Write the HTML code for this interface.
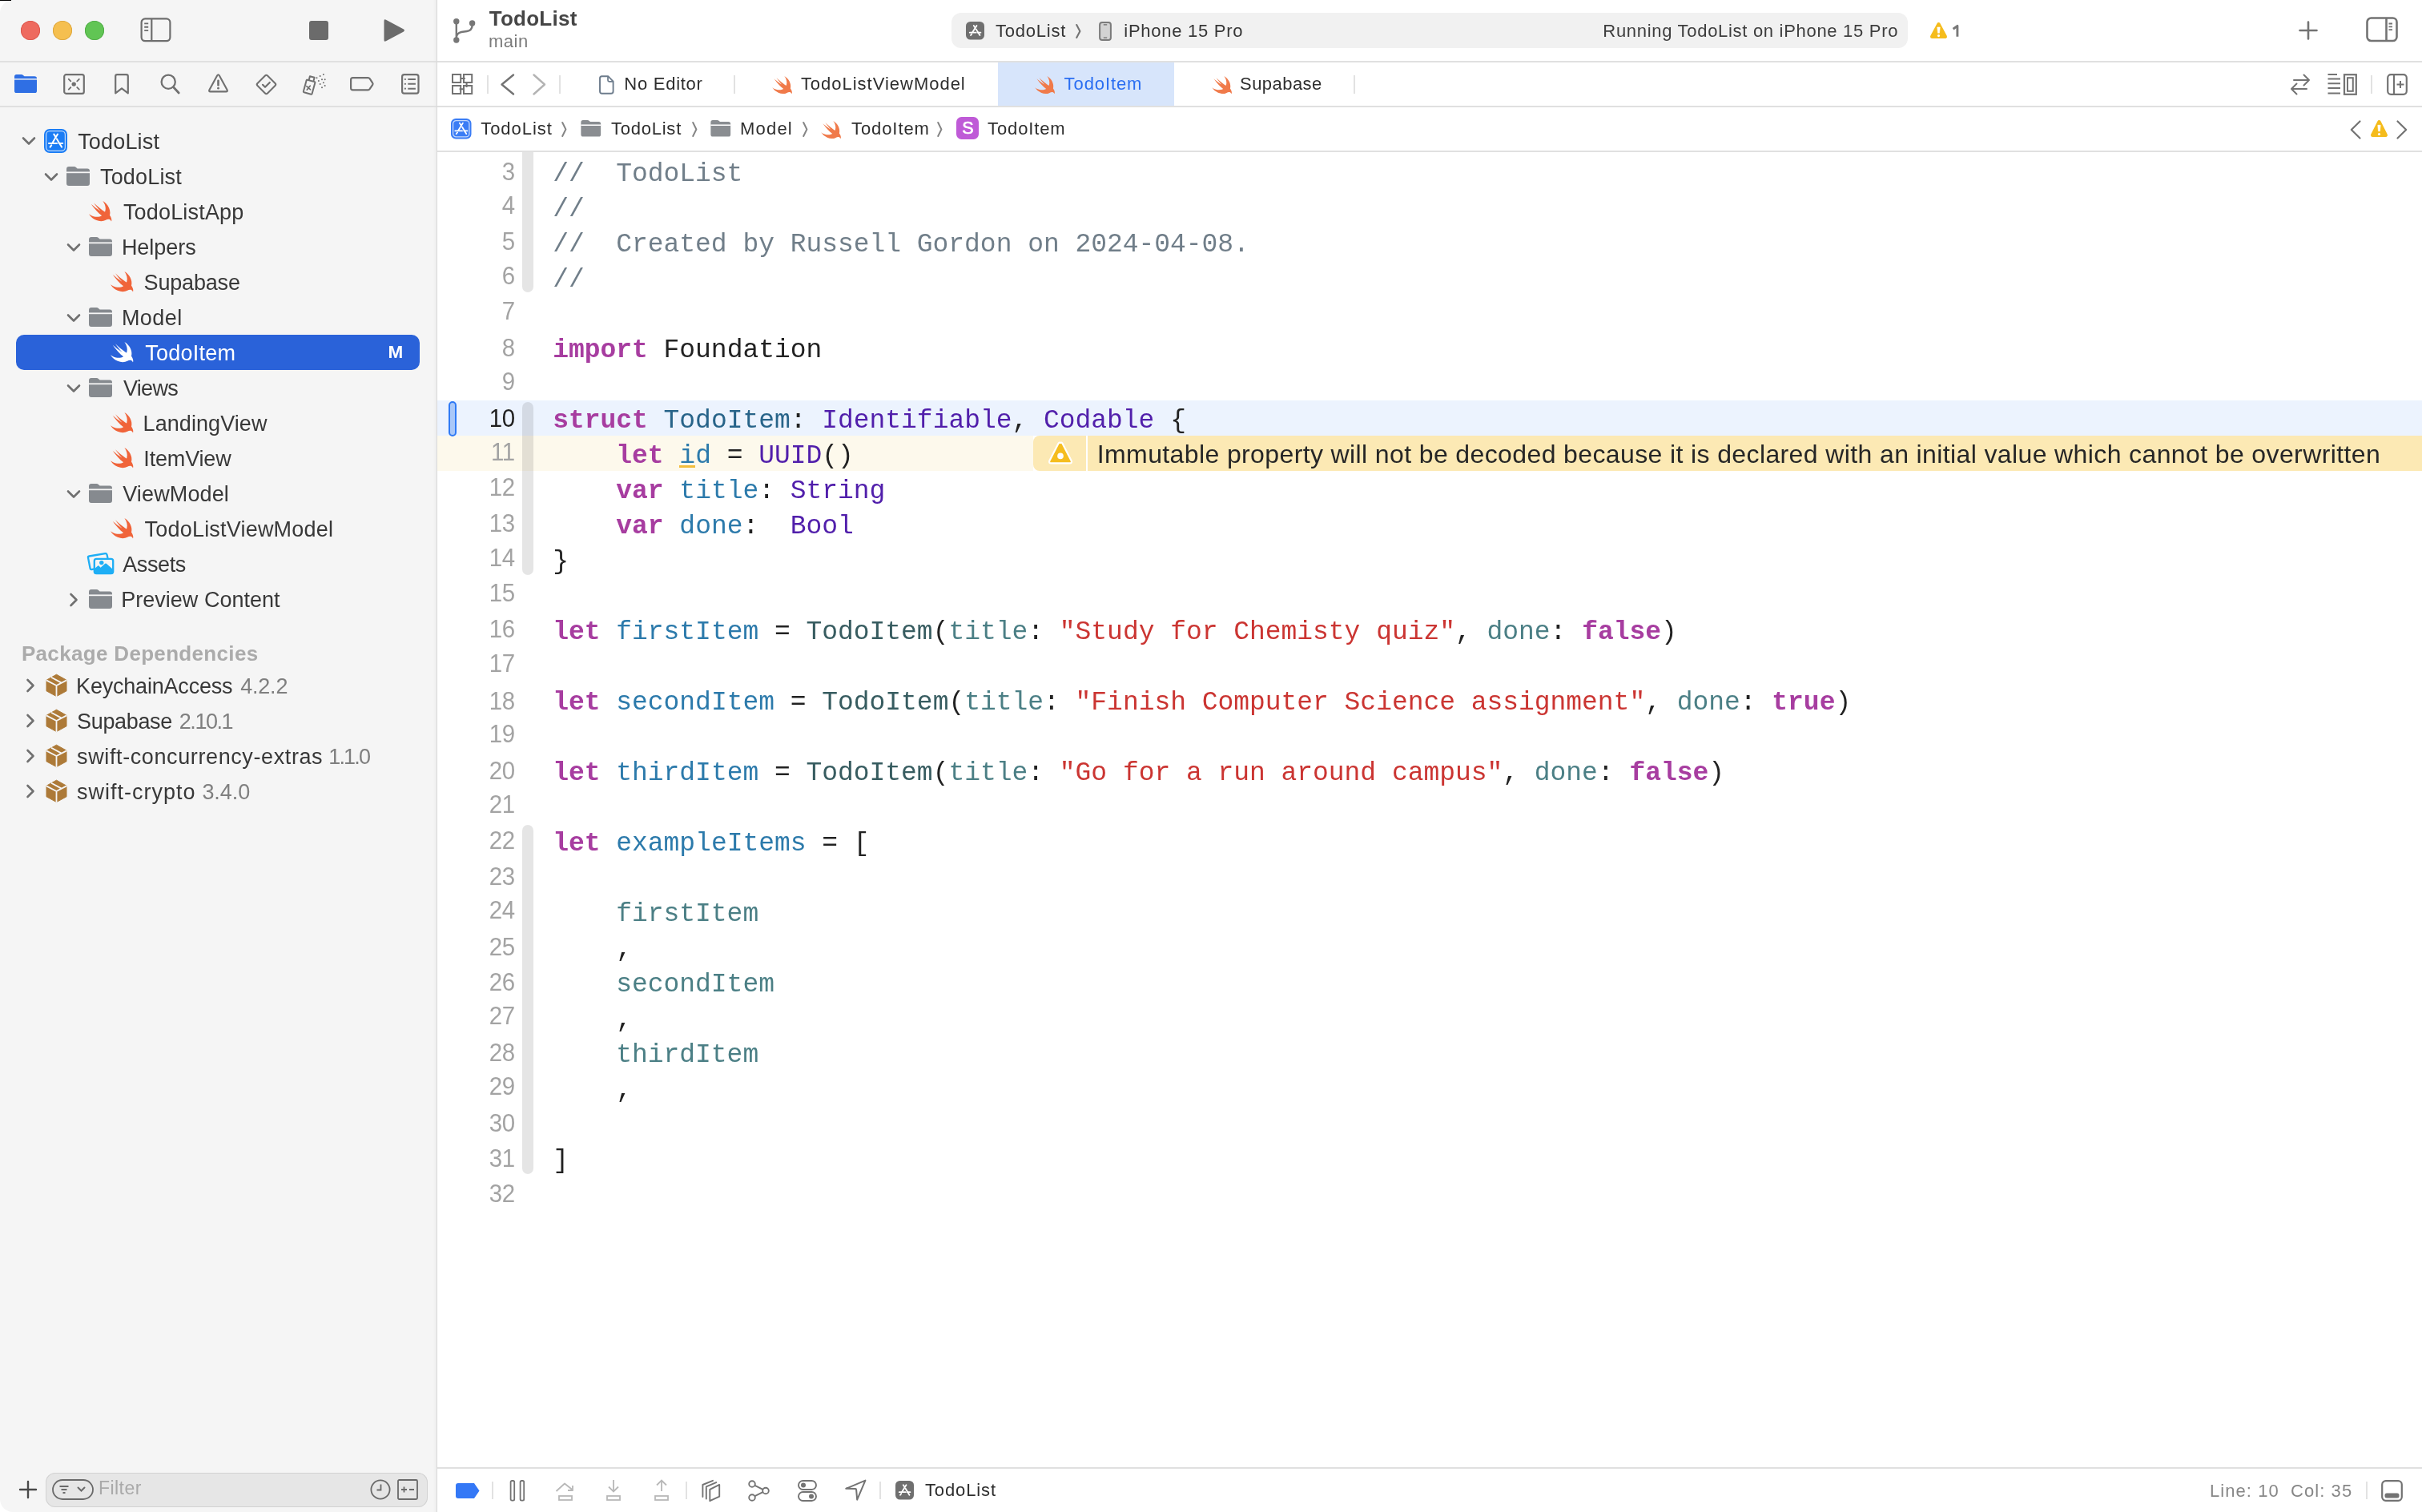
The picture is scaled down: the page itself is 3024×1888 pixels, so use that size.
<!DOCTYPE html><html><head><meta charset="utf-8"><style>html,body{margin:0;padding:0;width:3024px;height:1888px;overflow:hidden;background:#fff}*{box-sizing:border-box}</style></head><body><div style="position:absolute;left:0;top:0;width:3024px;height:1888px;overflow:hidden;border-radius:16px 0 0 16px;background:#fff;will-change:transform">
<div style="position:absolute;left:0px;top:0px;width:545px;height:1888px;background:#f5f5f5;"></div>
<div style="position:absolute;left:541px;top:0px;width:4px;height:1888px;background:linear-gradient(to right, rgba(0,0,0,0), rgba(0,0,0,0.035));"></div>
<div style="position:absolute;left:545px;top:0px;width:1px;height:1888px;background:#d9d9d9;"></div>
<div style="position:absolute;left:0px;top:76px;width:545px;height:2px;background:#e0e0e0;"></div>
<div style="position:absolute;left:546px;top:76px;width:2478px;height:2px;background:#e0e0e0;"></div>
<div style="position:absolute;left:0px;top:132px;width:545px;height:2px;background:#e0e0e0;"></div>
<div style="position:absolute;left:546px;top:132px;width:2478px;height:2px;background:#e0e0e0;"></div>
<div style="position:absolute;left:546px;top:188px;width:2478px;height:2px;background:#e0e0e0;"></div>
<div style="position:absolute;left:546px;top:1832px;width:2478px;height:2px;background:#e0e0e0;"></div>
<div style="position:absolute;left:26px;top:26px;width:24px;height:24px;border-radius:50%;background:#ee6a5f;box-shadow:inset 0 0 0 0.8px #d9534a"></div>
<div style="position:absolute;left:66px;top:26px;width:24px;height:24px;border-radius:50%;background:#f5bf4f;box-shadow:inset 0 0 0 0.8px #d9a23a"></div>
<div style="position:absolute;left:105.5px;top:26px;width:24px;height:24px;border-radius:50%;background:#61c554;box-shadow:inset 0 0 0 0.8px #4ea845"></div>
<svg style="position:absolute;left:174px;top:21px;overflow:visible" width="41" height="32" viewBox="0 0 41 32"><rect x="2.6" y="2.4" width="35.8" height="27.8" rx="4.6" fill="none" stroke="#6e6e6e" stroke-width="2.2"/><path d="M15.3 2.5V30.2" stroke="#6e6e6e" stroke-width="2.2"/><path d="M6.2 8.4H11.2M6.2 12.8H11.2M6.2 17.1H11.2" stroke="#6e6e6e" stroke-width="1.9"/></svg>
<div style="position:absolute;left:386px;top:26px;width:24px;height:24px;background:#6b6b6b;border-radius:3px"></div>
<svg style="position:absolute;left:478px;top:23px;overflow:visible" width="28" height="30" viewBox="0 0 28 30"><path d="M1.5 3.2Q1.5 0.4 4 1.8L26 13.6Q28 15 26 16.4L4 28.2Q1.5 29.6 1.5 26.8Z" fill="#6b6b6b"/></svg>
<svg style="position:absolute;left:18px;top:93px;overflow:visible" width="28" height="23" viewBox="0 0 28 23"><path fill="#2f6fe4" d="M0 2.6Q0 0 2.6 0H8.6Q10 0 11 1L12.4 2.2H25Q28 2.2 28 5V20.4Q28 23 25.4 23H2.6Q0 23 0 20.4Z"/><rect x="0" y="5.2" width="28" height="1.4" fill="#f5f5f5"/></svg>
<svg style="position:absolute;left:79px;top:92px;overflow:visible" width="27" height="26" viewBox="0 0 27 26"><rect x="1.2" y="1.2" width="24.6" height="23.6" rx="2.4" fill="none" stroke="#707070" stroke-width="2.2"/><circle cx="13.2" cy="13.1" r="2.7" fill="#707070"/><path d="M6.8 6.8L9.3 9.3M19.8 6.8L17.3 9.3M6.8 19.6L9.3 17.1M19.8 19.6L17.3 17.1" stroke="#707070" stroke-width="1.9" stroke-linecap="round"/></svg>
<svg style="position:absolute;left:143px;top:92px;overflow:visible" width="18" height="26" viewBox="0 0 18 26"><path d="M3.2 1.2H14.8Q16.8 1.2 16.8 3.2V24.4L9 18.4L1.2 24.4V3.2Q1.2 1.2 3.2 1.2Z" fill="none" stroke="#707070" stroke-width="2.2" stroke-linejoin="round"/></svg>
<svg style="position:absolute;left:200px;top:92px;overflow:visible" width="25" height="26" viewBox="0 0 25 26"><circle cx="10.2" cy="10.2" r="8.6" fill="none" stroke="#707070" stroke-width="2.3"/><path d="M16.5 16.8L23.2 24" stroke="#707070" stroke-width="2.8" stroke-linecap="round"/></svg>
<svg style="position:absolute;left:260px;top:92px;overflow:visible" width="25" height="24" viewBox="0 0 25 24"><path d="M11.2 2.3Q12.5 0.2 13.8 2.3L23.6 20.2Q24.6 22.4 22.2 22.4H2.8Q0.4 22.4 1.4 20.2Z" fill="none" stroke="#707070" stroke-width="2.1" stroke-linejoin="round"/><path d="M12.5 8.8V14.2" stroke="#707070" stroke-width="2.6" stroke-linecap="round"/><circle cx="12.5" cy="18.2" r="1.4" fill="#707070"/></svg>
<svg style="position:absolute;left:319px;top:92px;overflow:visible" width="27" height="27" viewBox="0 0 27 27"><path d="M12 2.5Q13.5 1 15 2.5L24.5 12Q26 13.5 24.5 15L15 24.5Q13.5 26 12 24.5L2.5 15Q1 13.5 2.5 12Z" fill="none" stroke="#707070" stroke-width="2.1" stroke-linejoin="round"/><path d="M9 13.8L12 16.8L17.8 11" fill="none" stroke="#707070" stroke-width="2.2" stroke-linecap="round" stroke-linejoin="round"/></svg>
<svg style="position:absolute;left:378px;top:92px;overflow:visible" width="30" height="28" viewBox="0 0 30 28"><g fill="none" stroke="#707070" stroke-width="2" stroke-linejoin="round"><path d="M4.6 8.4Q4.9 7.4 5.9 7.7L14.6 10.1Q15.6 10.4 15.3 11.4L11.6 25Q11.3 26 10.3 25.7L1.6 23.3Q0.6 23 0.9 22Z"/><path d="M7.6 8.3L8.9 3.3L14.6 4.8L13.3 9.8"/></g><path d="M4.8 15.6L9.6 19.8M9.2 15.2L5.2 20.2" stroke="#707070" stroke-width="1.7" stroke-linecap="round"/><g fill="#707070"><circle cx="25.9" cy="1" r="1"/><circle cx="21.7" cy="3" r="1"/><circle cx="17.5" cy="5.2" r="1"/><circle cx="24" cy="7.2" r="1"/><circle cx="27.7" cy="7.2" r="1"/><circle cx="19.9" cy="9" r="1"/><circle cx="25.9" cy="11.2" r="1"/><circle cx="21.7" cy="13" r="1"/><circle cx="27.7" cy="15" r="1"/><circle cx="24" cy="17.2" r="1"/></g></svg>
<svg style="position:absolute;left:437px;top:96px;overflow:visible" width="30" height="18" viewBox="0 0 30 18"><path d="M1.1 3.4Q1.1 1.1 3.4 1.1H22.6Q23.8 1.1 24.6 2.2L28.2 7.6Q29 8.7 28.2 9.8L24.6 15.2Q23.8 16.3 22.6 16.3H3.4Q1.1 16.3 1.1 14Z" fill="none" stroke="#707070" stroke-width="2.2" stroke-linejoin="round"/></svg>
<svg style="position:absolute;left:501px;top:92px;overflow:visible" width="23" height="26" viewBox="0 0 23 26"><rect x="1.1" y="1.1" width="20.4" height="23.6" rx="2.6" fill="none" stroke="#707070" stroke-width="2.2"/><path d="M8.3 7H17.9M8.3 12.8H17.9M8.3 18.7H17.9" stroke="#707070" stroke-width="2"/><g fill="#707070"><circle cx="4.9" cy="7" r="1.1"/><circle cx="4.9" cy="12.8" r="1.1"/><circle cx="4.9" cy="18.7" r="1.1"/></g></svg>
<svg style="position:absolute;left:27px;top:170px;overflow:visible" width="18" height="12" viewBox="0 0 18 12"><path d="M2 2.5L9 9.5L16 2.5" fill="none" stroke="#707070" stroke-width="2.6" stroke-linecap="round" stroke-linejoin="round"/></svg>
<svg style="position:absolute;left:54.5px;top:161px;overflow:visible" width="29" height="30" viewBox="0 0 29 30"><rect x="0" y="0" width="29" height="30" rx="6.96" fill="#1a7cf5"/><rect x="2.6" y="2.6" width="23.8" height="24.8" rx="4.76" fill="none" stroke="#ffffff" stroke-opacity="0.7" stroke-width="1.3"/><g transform="scale(1.0000,1.0000)" stroke="#fff" stroke-width="2.0" stroke-linecap="round" fill="none"><path d="M12.3 6.6L14.3 9.6"/><path d="M17.0 6.6L10.4 17.6"/><path d="M9.2 20.4L7.6 22.6"/><path d="M15.9 12.4L22.0 22.6"/><path d="M6.0 18.1H16.0M18.6 18.1H23.2"/></g></svg>
<div id="t0" style="position:absolute;left:97.20px;top:164.04px;font-family:'Liberation Sans', sans-serif;font-size:27px;line-height:27px;color:#383838;font-weight:400;letter-spacing:0.164px;white-space:pre;">TodoList</div>
<svg style="position:absolute;left:55px;top:214.5px;overflow:visible" width="18" height="12" viewBox="0 0 18 12"><path d="M2 2.5L9 9.5L16 2.5" fill="none" stroke="#707070" stroke-width="2.6" stroke-linecap="round" stroke-linejoin="round"/></svg>
<svg style="position:absolute;left:83px;top:208px;overflow:visible" width="29" height="24" viewBox="0 0 29 24"><path fill="#868a8f" d="M0 3.2Q0 0 3 0H9.5Q11 0 12.2 1.2L13.6 2.4H26Q29 2.4 29 5.4V21Q29 24 26 24H3Q0 24 0 21Z"/><rect x="0" y="6.4" width="29" height="1.8" fill="#f5f5f5"/></svg>
<div id="t1" style="position:absolute;left:125.00px;top:208.04px;font-family:'Liberation Sans', sans-serif;font-size:27px;line-height:27px;color:#383838;font-weight:400;letter-spacing:0.164px;white-space:pre;">TodoList</div>
<svg style="position:absolute;left:111.5px;top:250.8px;overflow:visible" width="27.2" height="27.2" viewBox="0 0 27.2 27.2"><g transform="scale(1.5632) translate(-3.04,-3.41)"><path fill="#f0643a" d="M13.543 3.41c4.114 2.47 6.545 7.162 5.549 11.131-.024.093-.05.181-.076.272l.002.001c2.062 2.538 1.5 5.258 1.236 4.745-1.072-2.086-3.066-1.568-4.088-1.043a6.803 6.803 0 0 1-.281.158l-.02.012-.002.002c-2.115 1.123-4.957 1.205-7.812-.022a12.568 12.568 0 0 1-5.64-4.838c.649.48 1.35.902 2.097 1.252 3.019 1.414 6.051 1.311 8.197-.002C9.651 12.73 7.101 9.67 5.146 7.191a14.42 14.42 0 0 1-1.005-1.384c2.34 2.142 6.038 4.83 7.365 5.576C8.69 8.408 6.208 4.743 6.324 4.86c4.436 4.47 8.528 6.996 8.528 6.996.154.085.27.154.36.213.085-.215.16-.437.224-.668.708-2.588-.09-5.548-1.893-7.992z"/></g></svg>
<div id="t2" style="position:absolute;left:153.90px;top:252.04px;font-family:'Liberation Sans', sans-serif;font-size:27px;line-height:27px;color:#383838;font-weight:400;letter-spacing:0.180px;white-space:pre;">TodoListApp</div>
<svg style="position:absolute;left:83px;top:302.5px;overflow:visible" width="18" height="12" viewBox="0 0 18 12"><path d="M2 2.5L9 9.5L16 2.5" fill="none" stroke="#707070" stroke-width="2.6" stroke-linecap="round" stroke-linejoin="round"/></svg>
<svg style="position:absolute;left:111px;top:296px;overflow:visible" width="29" height="24" viewBox="0 0 29 24"><path fill="#868a8f" d="M0 3.2Q0 0 3 0H9.5Q11 0 12.2 1.2L13.6 2.4H26Q29 2.4 29 5.4V21Q29 24 26 24H3Q0 24 0 21Z"/><rect x="0" y="6.4" width="29" height="1.8" fill="#f5f5f5"/></svg>
<div id="t3" style="position:absolute;left:151.90px;top:296.04px;font-family:'Liberation Sans', sans-serif;font-size:27px;line-height:27px;color:#383838;font-weight:400;letter-spacing:-0.033px;white-space:pre;">Helpers</div>
<svg style="position:absolute;left:139px;top:338.8px;overflow:visible" width="27.2" height="27.2" viewBox="0 0 27.2 27.2"><g transform="scale(1.5632) translate(-3.04,-3.41)"><path fill="#f0643a" d="M13.543 3.41c4.114 2.47 6.545 7.162 5.549 11.131-.024.093-.05.181-.076.272l.002.001c2.062 2.538 1.5 5.258 1.236 4.745-1.072-2.086-3.066-1.568-4.088-1.043a6.803 6.803 0 0 1-.281.158l-.02.012-.002.002c-2.115 1.123-4.957 1.205-7.812-.022a12.568 12.568 0 0 1-5.64-4.838c.649.48 1.35.902 2.097 1.252 3.019 1.414 6.051 1.311 8.197-.002C9.651 12.73 7.101 9.67 5.146 7.191a14.42 14.42 0 0 1-1.005-1.384c2.34 2.142 6.038 4.83 7.365 5.576C8.69 8.408 6.208 4.743 6.324 4.86c4.436 4.47 8.528 6.996 8.528 6.996.154.085.27.154.36.213.085-.215.16-.437.224-.668.708-2.588-.09-5.548-1.893-7.992z"/></g></svg>
<div id="t4" style="position:absolute;left:179.60px;top:340.04px;font-family:'Liberation Sans', sans-serif;font-size:27px;line-height:27px;color:#383838;font-weight:400;letter-spacing:-0.179px;white-space:pre;">Supabase</div>
<svg style="position:absolute;left:83px;top:390.5px;overflow:visible" width="18" height="12" viewBox="0 0 18 12"><path d="M2 2.5L9 9.5L16 2.5" fill="none" stroke="#707070" stroke-width="2.6" stroke-linecap="round" stroke-linejoin="round"/></svg>
<svg style="position:absolute;left:111px;top:384px;overflow:visible" width="29" height="24" viewBox="0 0 29 24"><path fill="#868a8f" d="M0 3.2Q0 0 3 0H9.5Q11 0 12.2 1.2L13.6 2.4H26Q29 2.4 29 5.4V21Q29 24 26 24H3Q0 24 0 21Z"/><rect x="0" y="6.4" width="29" height="1.8" fill="#f5f5f5"/></svg>
<div id="t5" style="position:absolute;left:151.90px;top:384.04px;font-family:'Liberation Sans', sans-serif;font-size:27px;line-height:27px;color:#383838;font-weight:400;letter-spacing:0.450px;white-space:pre;">Model</div>
<div style="position:absolute;left:20px;top:418px;width:504px;height:44px;background:#2a62d9;border-radius:10px"></div>
<svg style="position:absolute;left:139px;top:426.8px;overflow:visible" width="27.2" height="27.2" viewBox="0 0 27.2 27.2"><g transform="scale(1.5632) translate(-3.04,-3.41)"><path fill="#ffffff" d="M13.543 3.41c4.114 2.47 6.545 7.162 5.549 11.131-.024.093-.05.181-.076.272l.002.001c2.062 2.538 1.5 5.258 1.236 4.745-1.072-2.086-3.066-1.568-4.088-1.043a6.803 6.803 0 0 1-.281.158l-.02.012-.002.002c-2.115 1.123-4.957 1.205-7.812-.022a12.568 12.568 0 0 1-5.64-4.838c.649.48 1.35.902 2.097 1.252 3.019 1.414 6.051 1.311 8.197-.002C9.651 12.73 7.101 9.67 5.146 7.191a14.42 14.42 0 0 1-1.005-1.384c2.34 2.142 6.038 4.83 7.365 5.576C8.69 8.408 6.208 4.743 6.324 4.86c4.436 4.47 8.528 6.996 8.528 6.996.154.085.27.154.36.213.085-.215.16-.437.224-.668.708-2.588-.09-5.548-1.893-7.992z"/></g></svg>
<div id="t6" style="position:absolute;left:181.30px;top:428.04px;font-family:'Liberation Sans', sans-serif;font-size:27px;line-height:27px;color:#ffffff;font-weight:400;letter-spacing:0.221px;white-space:pre;">TodoItem</div>
<div id="t7" style="position:absolute;left:484.50px;top:429.15px;font-family:'Liberation Sans', sans-serif;font-size:22.5px;line-height:22.5px;color:#ffffff;font-weight:700;letter-spacing:3.000px;white-space:pre;">M</div>
<svg style="position:absolute;left:83px;top:478.5px;overflow:visible" width="18" height="12" viewBox="0 0 18 12"><path d="M2 2.5L9 9.5L16 2.5" fill="none" stroke="#707070" stroke-width="2.6" stroke-linecap="round" stroke-linejoin="round"/></svg>
<svg style="position:absolute;left:111px;top:472px;overflow:visible" width="29" height="24" viewBox="0 0 29 24"><path fill="#868a8f" d="M0 3.2Q0 0 3 0H9.5Q11 0 12.2 1.2L13.6 2.4H26Q29 2.4 29 5.4V21Q29 24 26 24H3Q0 24 0 21Z"/><rect x="0" y="6.4" width="29" height="1.8" fill="#f5f5f5"/></svg>
<div id="t8" style="position:absolute;left:153.90px;top:472.04px;font-family:'Liberation Sans', sans-serif;font-size:27px;line-height:27px;color:#383838;font-weight:400;letter-spacing:-0.675px;white-space:pre;">Views</div>
<svg style="position:absolute;left:139px;top:514.8px;overflow:visible" width="27.2" height="27.2" viewBox="0 0 27.2 27.2"><g transform="scale(1.5632) translate(-3.04,-3.41)"><path fill="#f0643a" d="M13.543 3.41c4.114 2.47 6.545 7.162 5.549 11.131-.024.093-.05.181-.076.272l.002.001c2.062 2.538 1.5 5.258 1.236 4.745-1.072-2.086-3.066-1.568-4.088-1.043a6.803 6.803 0 0 1-.281.158l-.02.012-.002.002c-2.115 1.123-4.957 1.205-7.812-.022a12.568 12.568 0 0 1-5.64-4.838c.649.48 1.35.902 2.097 1.252 3.019 1.414 6.051 1.311 8.197-.002C9.651 12.73 7.101 9.67 5.146 7.191a14.42 14.42 0 0 1-1.005-1.384c2.34 2.142 6.038 4.83 7.365 5.576C8.69 8.408 6.208 4.743 6.324 4.86c4.436 4.47 8.528 6.996 8.528 6.996.154.085.27.154.36.213.085-.215.16-.437.224-.668.708-2.588-.09-5.548-1.893-7.992z"/></g></svg>
<div id="t9" style="position:absolute;left:178.60px;top:516.04px;font-family:'Liberation Sans', sans-serif;font-size:27px;line-height:27px;color:#383838;font-weight:400;letter-spacing:0.070px;white-space:pre;">LandingView</div>
<svg style="position:absolute;left:139px;top:558.8px;overflow:visible" width="27.2" height="27.2" viewBox="0 0 27.2 27.2"><g transform="scale(1.5632) translate(-3.04,-3.41)"><path fill="#f0643a" d="M13.543 3.41c4.114 2.47 6.545 7.162 5.549 11.131-.024.093-.05.181-.076.272l.002.001c2.062 2.538 1.5 5.258 1.236 4.745-1.072-2.086-3.066-1.568-4.088-1.043a6.803 6.803 0 0 1-.281.158l-.02.012-.002.002c-2.115 1.123-4.957 1.205-7.812-.022a12.568 12.568 0 0 1-5.64-4.838c.649.48 1.35.902 2.097 1.252 3.019 1.414 6.051 1.311 8.197-.002C9.651 12.73 7.101 9.67 5.146 7.191a14.42 14.42 0 0 1-1.005-1.384c2.34 2.142 6.038 4.83 7.365 5.576C8.69 8.408 6.208 4.743 6.324 4.86c4.436 4.47 8.528 6.996 8.528 6.996.154.085.27.154.36.213.085-.215.16-.437.224-.668.708-2.588-.09-5.548-1.893-7.992z"/></g></svg>
<div id="t10" style="position:absolute;left:179.30px;top:560.04px;font-family:'Liberation Sans', sans-serif;font-size:27px;line-height:27px;color:#383838;font-weight:400;letter-spacing:-0.164px;white-space:pre;">ItemView</div>
<svg style="position:absolute;left:83px;top:610.5px;overflow:visible" width="18" height="12" viewBox="0 0 18 12"><path d="M2 2.5L9 9.5L16 2.5" fill="none" stroke="#707070" stroke-width="2.6" stroke-linecap="round" stroke-linejoin="round"/></svg>
<svg style="position:absolute;left:111px;top:604px;overflow:visible" width="29" height="24" viewBox="0 0 29 24"><path fill="#868a8f" d="M0 3.2Q0 0 3 0H9.5Q11 0 12.2 1.2L13.6 2.4H26Q29 2.4 29 5.4V21Q29 24 26 24H3Q0 24 0 21Z"/><rect x="0" y="6.4" width="29" height="1.8" fill="#f5f5f5"/></svg>
<div id="t11" style="position:absolute;left:153.20px;top:604.04px;font-family:'Liberation Sans', sans-serif;font-size:27px;line-height:27px;color:#383838;font-weight:400;letter-spacing:0.138px;white-space:pre;">ViewModel</div>
<svg style="position:absolute;left:139px;top:646.8px;overflow:visible" width="27.2" height="27.2" viewBox="0 0 27.2 27.2"><g transform="scale(1.5632) translate(-3.04,-3.41)"><path fill="#f0643a" d="M13.543 3.41c4.114 2.47 6.545 7.162 5.549 11.131-.024.093-.05.181-.076.272l.002.001c2.062 2.538 1.5 5.258 1.236 4.745-1.072-2.086-3.066-1.568-4.088-1.043a6.803 6.803 0 0 1-.281.158l-.02.012-.002.002c-2.115 1.123-4.957 1.205-7.812-.022a12.568 12.568 0 0 1-5.64-4.838c.649.48 1.35.902 2.097 1.252 3.019 1.414 6.051 1.311 8.197-.002C9.651 12.73 7.101 9.67 5.146 7.191a14.42 14.42 0 0 1-1.005-1.384c2.34 2.142 6.038 4.83 7.365 5.576C8.69 8.408 6.208 4.743 6.324 4.86c4.436 4.47 8.528 6.996 8.528 6.996.154.085.27.154.36.213.085-.215.16-.437.224-.668.708-2.588-.09-5.548-1.893-7.992z"/></g></svg>
<div id="t12" style="position:absolute;left:180.60px;top:648.04px;font-family:'Liberation Sans', sans-serif;font-size:27px;line-height:27px;color:#383838;font-weight:400;letter-spacing:0.200px;white-space:pre;">TodoListViewModel</div>
<svg style="position:absolute;left:109px;top:688px;overflow:visible" width="34" height="30" viewBox="0 0 34 30"><path d="M7.6 22.6L5.6 23.1Q3.9 23.4 3.6 21.8L1.0 8.4Q0.7 6.8 2.3 6.5L22.4 3.2Q24.1 3.0 24.5 4.6L25.4 8.6" fill="none" stroke="#1eaef5" stroke-width="2.3" stroke-linecap="round"/><rect x="8.8" y="9.8" width="23.4" height="18.2" rx="2.6" fill="none" stroke="#1eaef5" stroke-width="2.3"/><path d="M8.6 22.6L13.2 18.6Q13.8 18.1 14.4 18.6L16.6 20.7L22.2 15.8Q23 15.2 23.8 15.8L32.4 23.2V26.4Q32.4 29 29.8 29H11.2Q8.6 29 8.6 26.4Z" fill="#1eaef5"/><circle cx="17.8" cy="14.6" r="2.7" fill="#1eaef5"/></svg>
<div id="t13" style="position:absolute;left:153.20px;top:692.04px;font-family:'Liberation Sans', sans-serif;font-size:27px;line-height:27px;color:#383838;font-weight:400;letter-spacing:-0.390px;white-space:pre;">Assets</div>
<svg style="position:absolute;left:86px;top:739.5px;overflow:visible" width="12" height="18" viewBox="0 0 12 18"><path d="M2.5 2L9.5 9L2.5 16" fill="none" stroke="#707070" stroke-width="2.6" stroke-linecap="round" stroke-linejoin="round"/></svg>
<svg style="position:absolute;left:111px;top:736px;overflow:visible" width="29" height="24" viewBox="0 0 29 24"><path fill="#868a8f" d="M0 3.2Q0 0 3 0H9.5Q11 0 12.2 1.2L13.6 2.4H26Q29 2.4 29 5.4V21Q29 24 26 24H3Q0 24 0 21Z"/><rect x="0" y="6.4" width="29" height="1.8" fill="#f5f5f5"/></svg>
<div id="t14" style="position:absolute;left:151.20px;top:736.04px;font-family:'Liberation Sans', sans-serif;font-size:27px;line-height:27px;color:#383838;font-weight:400;letter-spacing:0.021px;white-space:pre;">Preview Content</div>
<div id="t15" style="position:absolute;left:26.90px;top:802.99px;font-family:'Liberation Sans', sans-serif;font-size:26px;line-height:26px;color:#ababab;font-weight:700;letter-spacing:0.329px;white-space:pre;">Package Dependencies</div>
<svg style="position:absolute;left:32px;top:847.0px;overflow:visible" width="12" height="18" viewBox="0 0 12 18"><path d="M2.5 2L9.5 9L2.5 16" fill="none" stroke="#707070" stroke-width="2.6" stroke-linecap="round" stroke-linejoin="round"/></svg>
<svg style="position:absolute;left:56.5px;top:841.0px;overflow:visible" width="27" height="29" viewBox="0 0 27 29"><path fill="#ad7a38" stroke="#ad7a38" stroke-width="1" stroke-linejoin="round" d="M13.5 1.2L26 8.2V21.8L13.5 28.6L1 21.8V8.2Z"/><path d="M0.8 8.4L13.5 15L26.2 8.4M13.5 15V29M7 4.8L19.8 11.6" fill="none" stroke="#f5f5f5" stroke-width="1.8"/></svg>
<div id="t16" style="position:absolute;left:95.10px;top:843.54px;font-family:'Liberation Sans', sans-serif;font-size:27px;line-height:27px;color:#383838;font-weight:400;letter-spacing:-0.204px;white-space:pre;">KeychainAccess</div>
<div id="t17" style="position:absolute;left:300.20px;top:843.54px;font-family:'Liberation Sans', sans-serif;font-size:27px;line-height:27px;color:#7f7f7f;font-weight:400;letter-spacing:-0.200px;white-space:pre;">4.2.2</div>
<svg style="position:absolute;left:32px;top:891.0px;overflow:visible" width="12" height="18" viewBox="0 0 12 18"><path d="M2.5 2L9.5 9L2.5 16" fill="none" stroke="#707070" stroke-width="2.6" stroke-linecap="round" stroke-linejoin="round"/></svg>
<svg style="position:absolute;left:56.5px;top:885.0px;overflow:visible" width="27" height="29" viewBox="0 0 27 29"><path fill="#ad7a38" stroke="#ad7a38" stroke-width="1" stroke-linejoin="round" d="M13.5 1.2L26 8.2V21.8L13.5 28.6L1 21.8V8.2Z"/><path d="M0.8 8.4L13.5 15L26.2 8.4M13.5 15V29M7 4.8L19.8 11.6" fill="none" stroke="#f5f5f5" stroke-width="1.8"/></svg>
<div id="t18" style="position:absolute;left:96.10px;top:887.54px;font-family:'Liberation Sans', sans-serif;font-size:27px;line-height:27px;color:#383838;font-weight:400;letter-spacing:-0.350px;white-space:pre;">Supabase</div>
<div id="t19" style="position:absolute;left:223.80px;top:887.54px;font-family:'Liberation Sans', sans-serif;font-size:27px;line-height:27px;color:#7f7f7f;font-weight:400;letter-spacing:-1.450px;white-space:pre;">2.10.1</div>
<svg style="position:absolute;left:32px;top:935.0px;overflow:visible" width="12" height="18" viewBox="0 0 12 18"><path d="M2.5 2L9.5 9L2.5 16" fill="none" stroke="#707070" stroke-width="2.6" stroke-linecap="round" stroke-linejoin="round"/></svg>
<svg style="position:absolute;left:56.5px;top:929.0px;overflow:visible" width="27" height="29" viewBox="0 0 27 29"><path fill="#ad7a38" stroke="#ad7a38" stroke-width="1" stroke-linejoin="round" d="M13.5 1.2L26 8.2V21.8L13.5 28.6L1 21.8V8.2Z"/><path d="M0.8 8.4L13.5 15L26.2 8.4M13.5 15V29M7 4.8L19.8 11.6" fill="none" stroke="#f5f5f5" stroke-width="1.8"/></svg>
<div id="t20" style="position:absolute;left:96.10px;top:931.54px;font-family:'Liberation Sans', sans-serif;font-size:27px;line-height:27px;color:#383838;font-weight:400;letter-spacing:0.607px;white-space:pre;">swift-concurrency-extras</div>
<div id="t21" style="position:absolute;left:410.20px;top:931.54px;font-family:'Liberation Sans', sans-serif;font-size:27px;line-height:27px;color:#7f7f7f;font-weight:400;letter-spacing:-1.800px;white-space:pre;">1.1.0</div>
<svg style="position:absolute;left:32px;top:979.0px;overflow:visible" width="12" height="18" viewBox="0 0 12 18"><path d="M2.5 2L9.5 9L2.5 16" fill="none" stroke="#707070" stroke-width="2.6" stroke-linecap="round" stroke-linejoin="round"/></svg>
<svg style="position:absolute;left:56.5px;top:973.0px;overflow:visible" width="27" height="29" viewBox="0 0 27 29"><path fill="#ad7a38" stroke="#ad7a38" stroke-width="1" stroke-linejoin="round" d="M13.5 1.2L26 8.2V21.8L13.5 28.6L1 21.8V8.2Z"/><path d="M0.8 8.4L13.5 15L26.2 8.4M13.5 15V29M7 4.8L19.8 11.6" fill="none" stroke="#f5f5f5" stroke-width="1.8"/></svg>
<div id="t22" style="position:absolute;left:96.10px;top:975.54px;font-family:'Liberation Sans', sans-serif;font-size:27px;line-height:27px;color:#383838;font-weight:400;letter-spacing:0.995px;white-space:pre;">swift-crypto</div>
<div id="t23" style="position:absolute;left:252.40px;top:975.54px;font-family:'Liberation Sans', sans-serif;font-size:27px;line-height:27px;color:#7f7f7f;font-weight:400;letter-spacing:-0.050px;white-space:pre;">3.4.0</div>
<svg style="position:absolute;left:24px;top:1849px;overflow:visible" width="22" height="22" viewBox="0 0 22 22"><path d="M11 1V21M1 11H21" stroke="#4a4a4a" stroke-width="2.4" stroke-linecap="round"/></svg>
<div style="position:absolute;left:57px;top:1838.5px;width:477px;height:43px;background:#e6e6e6;border-radius:12px;box-shadow:inset 0 0 0 1px #d2d2d2"></div>
<svg style="position:absolute;left:65px;top:1847px;overflow:visible" width="52" height="26" viewBox="0 0 52 26"><rect x="1" y="1" width="50" height="24" rx="12" fill="none" stroke="#6a6a6a" stroke-width="1.8"/><path d="M9.5 9H20.5M11.5 13H18.5M13.5 17H16.5" stroke="#6a6a6a" stroke-width="1.8"/><path d="M32.5 10.5L36.5 14.5L40.5 10.5" fill="none" stroke="#6a6a6a" stroke-width="2" stroke-linecap="round"/></svg>
<div id="t24" style="position:absolute;left:122.90px;top:1847.23px;font-family:'Liberation Sans', sans-serif;font-size:23px;line-height:23px;color:#a9a9a9;font-weight:400;letter-spacing:0.460px;white-space:pre;">Filter</div>
<svg style="position:absolute;left:462px;top:1847px;overflow:visible" width="26" height="26" viewBox="0 0 26 26"><circle cx="13" cy="13" r="11.6" fill="none" stroke="#6a6a6a" stroke-width="1.8"/><path d="M13.5 6.5V13.5H8.5" fill="none" stroke="#6a6a6a" stroke-width="1.8"/></svg>
<svg style="position:absolute;left:496px;top:1847px;overflow:visible" width="26" height="26" viewBox="0 0 26 26"><rect x="1" y="1" width="24" height="24" rx="1.5" fill="none" stroke="#6a6a6a" stroke-width="1.8"/><path d="M5 13H12M8.5 9.5V16.5M15 13H21" stroke="#6a6a6a" stroke-width="1.8"/></svg>
<svg style="position:absolute;left:563px;top:22px;overflow:visible" width="32" height="33" viewBox="0 0 32 33"><g fill="#777"><circle cx="6.8" cy="4.8" r="3.7"/><circle cx="26.6" cy="7" r="3.7"/><circle cx="6.8" cy="28" r="3.7"/></g><path d="M6.8 5V28M26.6 7V10Q26.3 16 20 17L13 18Q7 19.5 6.8 25" fill="none" stroke="#777" stroke-width="2.4"/></svg>
<div id="t25" style="position:absolute;left:610.80px;top:9.79px;font-family:'Liberation Sans', sans-serif;font-size:26px;line-height:26px;color:#464646;font-weight:700;letter-spacing:0.243px;white-space:pre;">TodoList</div>
<div id="t26" style="position:absolute;left:610.00px;top:41.38px;font-family:'Liberation Sans', sans-serif;font-size:22px;line-height:22px;color:#7c7c7c;font-weight:400;letter-spacing:0.500px;white-space:pre;">main</div>
<div style="position:absolute;left:1188px;top:16px;width:1194px;height:44px;background:#f1f1f1;border-radius:12px"></div>
<svg style="position:absolute;left:1206px;top:27px;overflow:visible" width="23" height="22.6" viewBox="0 0 23 22.6"><rect x="0" y="0" width="23" height="22.6" rx="5.52" fill="#6f6f6f"/><g transform="scale(0.7931,0.7533)" stroke="#fff" stroke-width="2.3" stroke-linecap="round" fill="none"><path d="M12.3 6.6L14.3 9.6"/><path d="M17.0 6.6L10.4 17.6"/><path d="M9.2 20.4L7.6 22.6"/><path d="M15.9 12.4L22.0 22.6"/><path d="M6.0 18.1H16.0M18.6 18.1H23.2"/></g></svg>
<div id="t27" style="position:absolute;left:1243.00px;top:27.58px;font-family:'Liberation Sans', sans-serif;font-size:22px;line-height:22px;color:#363636;font-weight:400;letter-spacing:0.786px;white-space:pre;">TodoList</div>
<svg style="position:absolute;left:1342px;top:29.5px;overflow:visible" width="9" height="18.0" viewBox="0 0 9 18.0"><path d="M2.2 1L6.4 9.0L2.2 17.0" fill="none" stroke="#737373" stroke-width="2.1" stroke-linecap="round" stroke-linejoin="round"/></svg>
<svg style="position:absolute;left:1372px;top:26.5px;overflow:visible" width="16" height="24" viewBox="0 0 16 24"><rect x="1.1" y="1.1" width="13.8" height="21.8" rx="3" fill="#d3d3d3" stroke="#7b7b7b" stroke-width="2"/><path d="M5.8 3.9H10.2M5.8 20.2H10.2" stroke="#6f6f6f" stroke-width="1.3"/></svg>
<div id="t28" style="position:absolute;left:1403.30px;top:27.58px;font-family:'Liberation Sans', sans-serif;font-size:22px;line-height:22px;color:#363636;font-weight:400;letter-spacing:0.725px;white-space:pre;">iPhone 15 Pro</div>
<div id="t29" style="position:absolute;left:2001.30px;top:27.58px;font-family:'Liberation Sans', sans-serif;font-size:22px;line-height:22px;color:#3d3d3d;font-weight:400;letter-spacing:0.700px;white-space:pre;">Running TodoList on iPhone 15 Pro</div>
<svg style="position:absolute;left:2409.5px;top:27.5px;overflow:visible" width="21" height="20" viewBox="0 0 21 20"><path d="M10.5 2.2L18.8 17.8H2.2Z" fill="#f5bc1c" stroke="#f5bc1c" stroke-width="4.4" stroke-linejoin="round"/><path d="M8.80 6.00H12.20L11.50 13.20H9.50Z" fill="#fff" stroke="#fff" stroke-width="0.6" stroke-linejoin="round"/><circle cx="10.5" cy="16.60" r="1.55" fill="#fff"/></svg>
<svg style="position:absolute;left:2436px;top:30px;overflow:visible" width="12" height="17" viewBox="0 0 12 17"><path d="M2.6 6.2L7.9 2.4V15.8" fill="none" stroke="#787878" stroke-width="2.9" stroke-linejoin="round"/></svg>
<svg style="position:absolute;left:2870px;top:26px;overflow:visible" width="24" height="24" viewBox="0 0 24 24"><path d="M12 1.5V22.5M1.5 12H22.5" stroke="#737373" stroke-width="2.6" stroke-linecap="round"/></svg>
<svg style="position:absolute;left:2954px;top:21px;overflow:visible" width="40" height="32" viewBox="0 0 40 32"><rect x="1.5" y="1.5" width="37" height="28.5" rx="5" fill="none" stroke="#737373" stroke-width="2.6"/><path d="M25.5 2V30" stroke="#737373" stroke-width="2.6"/><path d="M28.5 8.5H33M28.5 12.3H33M28.5 16.1H33" stroke="#737373" stroke-width="1.8"/></svg>
<div style="position:absolute;left:1246px;top:78px;width:220px;height:54px;background:#d7e5fb;"></div>
<svg style="position:absolute;left:564px;top:92px;overflow:visible" width="27" height="27" viewBox="0 0 27 27"><g fill="none" stroke="#737373" stroke-width="2"><rect x="1" y="1" width="10.2" height="10" /><rect x="15" y="1" width="10.2" height="10"/><rect x="1" y="15" width="10.2" height="10"/><rect x="15" y="15" width="10.2" height="10"/><path d="M11.2 6H16.8M18.6 11V17M9.6 19.2H15"/></g></svg>
<div style="position:absolute;left:608px;top:94px;width:2px;height:23px;background:#e2e2e2;"></div>
<svg style="position:absolute;left:624px;top:92px;overflow:visible" width="19" height="27" viewBox="0 0 19 27"><path d="M17 1.5L2.5 13.5L17 25.5" fill="none" stroke="#737373" stroke-width="2.4" stroke-linecap="round" stroke-linejoin="round"/></svg>
<svg style="position:absolute;left:665px;top:92px;overflow:visible" width="17" height="27" viewBox="0 0 17 27"><path d="M1.5 1.5L15 13.5L1.5 25.5" fill="none" stroke="#b3b3b3" stroke-width="2.4" stroke-linecap="round" stroke-linejoin="round"/></svg>
<div style="position:absolute;left:698px;top:94px;width:2px;height:23px;background:#e2e2e2;"></div>
<svg style="position:absolute;left:748px;top:93.5px;overflow:visible" width="19" height="24" viewBox="0 0 19 24"><path d="M3.4 1.2H11.2L17.6 7.6V20Q17.6 22.8 14.8 22.8H3.6Q1 22.8 1 20V3.8Q1 1.2 3.4 1.2Z" fill="none" stroke="#6d7c8c" stroke-width="1.9" stroke-linejoin="round"/><path d="M11 1.6V6.2Q11 7.8 12.6 7.8H17.2" fill="none" stroke="#6d7c8c" stroke-width="1.7"/></svg>
<div id="t30" style="position:absolute;left:779.30px;top:94.18px;font-family:'Liberation Sans', sans-serif;font-size:22px;line-height:22px;color:#2e2e2e;font-weight:400;letter-spacing:0.738px;white-space:pre;">No Editor</div>
<div style="position:absolute;left:916px;top:94px;width:2px;height:23px;background:#e2e2e2;"></div>
<svg style="position:absolute;left:965px;top:94.5px;overflow:visible" width="23.8" height="23.8" viewBox="0 0 23.8 23.8"><g transform="scale(1.3678) translate(-3.04,-3.41)"><path fill="#f07a4a" d="M13.543 3.41c4.114 2.47 6.545 7.162 5.549 11.131-.024.093-.05.181-.076.272l.002.001c2.062 2.538 1.5 5.258 1.236 4.745-1.072-2.086-3.066-1.568-4.088-1.043a6.803 6.803 0 0 1-.281.158l-.02.012-.002.002c-2.115 1.123-4.957 1.205-7.812-.022a12.568 12.568 0 0 1-5.64-4.838c.649.48 1.35.902 2.097 1.252 3.019 1.414 6.051 1.311 8.197-.002C9.651 12.73 7.101 9.67 5.146 7.191a14.42 14.42 0 0 1-1.005-1.384c2.34 2.142 6.038 4.83 7.365 5.576C8.69 8.408 6.208 4.743 6.324 4.86c4.436 4.47 8.528 6.996 8.528 6.996.154.085.27.154.36.213.085-.215.16-.437.224-.668.708-2.588-.09-5.548-1.893-7.992z"/></g></svg>
<div id="t31" style="position:absolute;left:999.90px;top:94.18px;font-family:'Liberation Sans', sans-serif;font-size:22px;line-height:22px;color:#2e2e2e;font-weight:400;letter-spacing:0.981px;white-space:pre;">TodoListViewModel</div>
<svg style="position:absolute;left:1293px;top:94.5px;overflow:visible" width="23.8" height="23.8" viewBox="0 0 23.8 23.8"><g transform="scale(1.3678) translate(-3.04,-3.41)"><path fill="#f07a4a" d="M13.543 3.41c4.114 2.47 6.545 7.162 5.549 11.131-.024.093-.05.181-.076.272l.002.001c2.062 2.538 1.5 5.258 1.236 4.745-1.072-2.086-3.066-1.568-4.088-1.043a6.803 6.803 0 0 1-.281.158l-.02.012-.002.002c-2.115 1.123-4.957 1.205-7.812-.022a12.568 12.568 0 0 1-5.64-4.838c.649.48 1.35.902 2.097 1.252 3.019 1.414 6.051 1.311 8.197-.002C9.651 12.73 7.101 9.67 5.146 7.191a14.42 14.42 0 0 1-1.005-1.384c2.34 2.142 6.038 4.83 7.365 5.576C8.69 8.408 6.208 4.743 6.324 4.86c4.436 4.47 8.528 6.996 8.528 6.996.154.085.27.154.36.213.085-.215.16-.437.224-.668.708-2.588-.09-5.548-1.893-7.992z"/></g></svg>
<div id="t32" style="position:absolute;left:1328.60px;top:94.18px;font-family:'Liberation Sans', sans-serif;font-size:22px;line-height:22px;color:#2a6ef2;font-weight:400;letter-spacing:0.900px;white-space:pre;">TodoItem</div>
<svg style="position:absolute;left:1513.5px;top:94.5px;overflow:visible" width="23.8" height="23.8" viewBox="0 0 23.8 23.8"><g transform="scale(1.3678) translate(-3.04,-3.41)"><path fill="#f07a4a" d="M13.543 3.41c4.114 2.47 6.545 7.162 5.549 11.131-.024.093-.05.181-.076.272l.002.001c2.062 2.538 1.5 5.258 1.236 4.745-1.072-2.086-3.066-1.568-4.088-1.043a6.803 6.803 0 0 1-.281.158l-.02.012-.002.002c-2.115 1.123-4.957 1.205-7.812-.022a12.568 12.568 0 0 1-5.64-4.838c.649.48 1.35.902 2.097 1.252 3.019 1.414 6.051 1.311 8.197-.002C9.651 12.73 7.101 9.67 5.146 7.191a14.42 14.42 0 0 1-1.005-1.384c2.34 2.142 6.038 4.83 7.365 5.576C8.69 8.408 6.208 4.743 6.324 4.86c4.436 4.47 8.528 6.996 8.528 6.996.154.085.27.154.36.213.085-.215.16-.437.224-.668.708-2.588-.09-5.548-1.893-7.992z"/></g></svg>
<div id="t33" style="position:absolute;left:1548.00px;top:94.18px;font-family:'Liberation Sans', sans-serif;font-size:22px;line-height:22px;color:#2e2e2e;font-weight:400;letter-spacing:0.457px;white-space:pre;">Supabase</div>
<div style="position:absolute;left:1690px;top:94px;width:2px;height:23px;background:#e2e2e2;"></div>
<svg style="position:absolute;left:2859px;top:91.5px;overflow:visible" width="26" height="27" viewBox="0 0 26 27"><path d="M5 8H24M17.5 1.5L24 8L17.5 14.5M21 19H2M8.5 12.5L2 19L8.5 25.5" fill="none" stroke="#737373" stroke-width="2" stroke-linecap="round" stroke-linejoin="round"/></svg>
<svg style="position:absolute;left:2905.5px;top:91.5px;overflow:visible" width="37" height="27" viewBox="0 0 37 27"><path d="M0.5 1H12M0.5 6.5H16M0.5 12.2H16M0.5 18H16M0.5 24.5H16" stroke="#737373" stroke-width="1.9"/><rect x="21" y="1.2" width="14.8" height="24.6" fill="none" stroke="#737373" stroke-width="2.2"/><rect x="25" y="5.2" width="6.8" height="16.6" fill="none" stroke="#737373" stroke-width="2"/></svg>
<div style="position:absolute;left:2960px;top:94px;width:2px;height:23px;background:#e2e2e2;"></div>
<svg style="position:absolute;left:2980px;top:91.5px;overflow:visible" width="26" height="27" viewBox="0 0 26 27"><rect x="1.2" y="1.2" width="23.6" height="24.6" rx="4" fill="none" stroke="#737373" stroke-width="2.2"/><path d="M9 1.5V25.5" stroke="#737373" stroke-width="2.2"/><path d="M17 9V18M12.5 13.5H21.5" stroke="#737373" stroke-width="2"/></svg>
<svg style="position:absolute;left:563px;top:147.5px;overflow:visible" width="25.5" height="25.5" viewBox="0 0 25.5 25.5"><rect x="0" y="0" width="25.5" height="25.5" rx="6.12" fill="#3a7cf5"/><rect x="2.6" y="2.6" width="20.3" height="20.3" rx="3.92" fill="none" stroke="#ffffff" stroke-opacity="0.7" stroke-width="1.3"/><g transform="scale(0.8793,0.8500)" stroke="#fff" stroke-width="2.0" stroke-linecap="round" fill="none"><path d="M12.3 6.6L14.3 9.6"/><path d="M17.0 6.6L10.4 17.6"/><path d="M9.2 20.4L7.6 22.6"/><path d="M15.9 12.4L22.0 22.6"/><path d="M6.0 18.1H16.0M18.6 18.1H23.2"/></g></svg>
<div id="t34" style="position:absolute;left:600.20px;top:150.28px;font-family:'Liberation Sans', sans-serif;font-size:22px;line-height:22px;color:#2e2e2e;font-weight:400;letter-spacing:0.957px;white-space:pre;">TodoList</div>
<svg style="position:absolute;left:700px;top:151.5px;overflow:visible" width="9" height="19.0" viewBox="0 0 9 19.0"><path d="M2.2 1L6.4 9.5L2.2 18.0" fill="none" stroke="#858585" stroke-width="2.0" stroke-linecap="round" stroke-linejoin="round"/></svg>
<svg style="position:absolute;left:725px;top:150px;overflow:visible" width="25.5" height="20.5" viewBox="0 0 29 24"><path fill="#8a8d91" d="M0 3.2Q0 0 3 0H9.5Q11 0 12.2 1.2L13.6 2.4H26Q29 2.4 29 5.4V21Q29 24 26 24H3Q0 24 0 21Z"/><rect x="0" y="6.4" width="29" height="1.8" fill="#ffffff"/></svg>
<div id="t35" style="position:absolute;left:763.00px;top:150.28px;font-family:'Liberation Sans', sans-serif;font-size:22px;line-height:22px;color:#2e2e2e;font-weight:400;letter-spacing:0.757px;white-space:pre;">TodoList</div>
<svg style="position:absolute;left:862.5px;top:151.5px;overflow:visible" width="9" height="19.0" viewBox="0 0 9 19.0"><path d="M2.2 1L6.4 9.5L2.2 18.0" fill="none" stroke="#858585" stroke-width="2.0" stroke-linecap="round" stroke-linejoin="round"/></svg>
<svg style="position:absolute;left:887px;top:150px;overflow:visible" width="25.5" height="20.5" viewBox="0 0 29 24"><path fill="#8a8d91" d="M0 3.2Q0 0 3 0H9.5Q11 0 12.2 1.2L13.6 2.4H26Q29 2.4 29 5.4V21Q29 24 26 24H3Q0 24 0 21Z"/><rect x="0" y="6.4" width="29" height="1.8" fill="#ffffff"/></svg>
<div id="t36" style="position:absolute;left:924.00px;top:150.28px;font-family:'Liberation Sans', sans-serif;font-size:22px;line-height:22px;color:#2e2e2e;font-weight:400;letter-spacing:1.200px;white-space:pre;">Model</div>
<svg style="position:absolute;left:1000.5px;top:151.5px;overflow:visible" width="9" height="19.0" viewBox="0 0 9 19.0"><path d="M2.2 1L6.4 9.5L2.2 18.0" fill="none" stroke="#858585" stroke-width="2.0" stroke-linecap="round" stroke-linejoin="round"/></svg>
<svg style="position:absolute;left:1025.5px;top:150.5px;overflow:visible" width="23.8" height="23.8" viewBox="0 0 23.8 23.8"><g transform="scale(1.3678) translate(-3.04,-3.41)"><path fill="#f07a4a" d="M13.543 3.41c4.114 2.47 6.545 7.162 5.549 11.131-.024.093-.05.181-.076.272l.002.001c2.062 2.538 1.5 5.258 1.236 4.745-1.072-2.086-3.066-1.568-4.088-1.043a6.803 6.803 0 0 1-.281.158l-.02.012-.002.002c-2.115 1.123-4.957 1.205-7.812-.022a12.568 12.568 0 0 1-5.64-4.838c.649.48 1.35.902 2.097 1.252 3.019 1.414 6.051 1.311 8.197-.002C9.651 12.73 7.101 9.67 5.146 7.191a14.42 14.42 0 0 1-1.005-1.384c2.34 2.142 6.038 4.83 7.365 5.576C8.69 8.408 6.208 4.743 6.324 4.86c4.436 4.47 8.528 6.996 8.528 6.996.154.085.27.154.36.213.085-.215.16-.437.224-.668.708-2.588-.09-5.548-1.893-7.992z"/></g></svg>
<div id="t37" style="position:absolute;left:1063.00px;top:150.28px;font-family:'Liberation Sans', sans-serif;font-size:22px;line-height:22px;color:#2e2e2e;font-weight:400;letter-spacing:0.914px;white-space:pre;">TodoItem</div>
<svg style="position:absolute;left:1169px;top:151.5px;overflow:visible" width="9" height="19.0" viewBox="0 0 9 19.0"><path d="M2.2 1L6.4 9.5L2.2 18.0" fill="none" stroke="#858585" stroke-width="2.0" stroke-linecap="round" stroke-linejoin="round"/></svg>
<div style="position:absolute;left:1194px;top:146px;width:28px;height:28px;background:#bf5ad7;border-radius:6.5px"></div>
<div style="position:absolute;left:1201.20px;top:149.80px;font-family:'Liberation Sans', sans-serif;font-size:21.5px;line-height:21.5px;color:#ffffff;font-weight:400;letter-spacing:0.000px;white-space:pre;-webkit-text-stroke:0.7px #fff">S</div>
<div id="t38" style="position:absolute;left:1233.00px;top:150.28px;font-family:'Liberation Sans', sans-serif;font-size:22px;line-height:22px;color:#2e2e2e;font-weight:400;letter-spacing:0.886px;white-space:pre;">TodoItem</div>
<svg style="position:absolute;left:2933.5px;top:150px;overflow:visible" width="14" height="24" viewBox="0 0 14 24"><path d="M12.5 1.5L1.8 12L12.5 22.5" fill="none" stroke="#737373" stroke-width="2.2" stroke-linecap="round" stroke-linejoin="round"/></svg>
<svg style="position:absolute;left:2959.5px;top:150px;overflow:visible" width="21" height="21" viewBox="0 0 21 21"><path d="M10.5 2.2L18.8 18.8H2.2Z" fill="#f5bc1c" stroke="#f5bc1c" stroke-width="4.4" stroke-linejoin="round"/><path d="M8.80 6.30H12.20L11.50 13.86H9.50Z" fill="#fff" stroke="#fff" stroke-width="0.6" stroke-linejoin="round"/><circle cx="10.5" cy="17.43" r="1.55" fill="#fff"/></svg>
<svg style="position:absolute;left:2992px;top:150px;overflow:visible" width="14" height="24" viewBox="0 0 14 24"><path d="M1.5 1.5L12.2 12L1.5 22.5" fill="none" stroke="#737373" stroke-width="2.2" stroke-linecap="round" stroke-linejoin="round"/></svg>
<div style="position:absolute;left:546px;top:500px;width:2478px;height:44px;background:#ecf3fe;"></div>
<div style="position:absolute;left:546px;top:544px;width:744px;height:44px;background:#fdf9ec;"></div>
<div style="position:absolute;left:1290px;top:544px;width:1734px;height:44px;background:#fce9b4;border-radius:8px 0 0 8px"></div>
<div style="position:absolute;left:1356px;top:544px;width:2px;height:44px;background:#ffffff;"></div>
<svg style="position:absolute;left:1308px;top:549.5px;overflow:visible" width="32" height="32" viewBox="0 0 32 32"><path d="M16 3.2Q17.2 1.6 18.4 3.6L29.6 25.2Q30.8 28.4 27.6 28.4H4.4Q1.2 28.4 2.4 25.2L13.6 3.6Q14.8 1.6 16 3.2Z" fill="#f5bd1f" stroke="#ffffff" stroke-width="2.2" stroke-linejoin="round"/><circle cx="16" cy="19.4" r="3.8" fill="#fff"/></svg>
<div id="t39" style="position:absolute;left:1369.80px;top:550.61px;font-family:'Liberation Sans', sans-serif;font-size:32px;line-height:32px;color:#262626;font-weight:400;letter-spacing:0.381px;white-space:pre;">Immutable property will not be decoded because it is declared with an initial value which cannot be overwritten</div>
<div style="position:absolute;left:652px;top:190px;width:14px;height:175px;background:rgba(0,0,0,0.1);border-radius:0 0 7px 7px"></div>
<div style="position:absolute;left:652px;top:502px;width:14px;height:216px;background:rgba(0,0,0,0.1);border-radius:7px"></div>
<div style="position:absolute;left:652px;top:1030px;width:14px;height:436px;background:rgba(0,0,0,0.1);border-radius:7px"></div>
<div style="position:absolute;left:560px;top:500.5px;width:10px;height:44px;background:#a9c8f9;border:2px solid #2f7af5;border-radius:5px"></div>
<div style="position:absolute;left:560px;width:82.5px;top:198.01px;font-family:'Liberation Sans', sans-serif;font-size:32px;line-height:32px;color:#a3a3a3;text-align:right;white-space:pre;letter-spacing:-0.6px;transform:scaleX(0.92);transform-origin:100% 50%">3</div>
<div style="position:absolute;left:560px;width:82.5px;top:240.31px;font-family:'Liberation Sans', sans-serif;font-size:32px;line-height:32px;color:#a3a3a3;text-align:right;white-space:pre;letter-spacing:-0.6px;transform:scaleX(0.92);transform-origin:100% 50%">4</div>
<div style="position:absolute;left:560px;width:82.5px;top:284.81px;font-family:'Liberation Sans', sans-serif;font-size:32px;line-height:32px;color:#a3a3a3;text-align:right;white-space:pre;letter-spacing:-0.6px;transform:scaleX(0.92);transform-origin:100% 50%">5</div>
<div style="position:absolute;left:560px;width:82.5px;top:328.01px;font-family:'Liberation Sans', sans-serif;font-size:32px;line-height:32px;color:#a3a3a3;text-align:right;white-space:pre;letter-spacing:-0.6px;transform:scaleX(0.92);transform-origin:100% 50%">6</div>
<div style="position:absolute;left:560px;width:82.5px;top:372.01px;font-family:'Liberation Sans', sans-serif;font-size:32px;line-height:32px;color:#a3a3a3;text-align:right;white-space:pre;letter-spacing:-0.6px;transform:scaleX(0.92);transform-origin:100% 50%">7</div>
<div style="position:absolute;left:560px;width:82.5px;top:417.91px;font-family:'Liberation Sans', sans-serif;font-size:32px;line-height:32px;color:#a3a3a3;text-align:right;white-space:pre;letter-spacing:-0.6px;transform:scaleX(0.92);transform-origin:100% 50%">8</div>
<div style="position:absolute;left:560px;width:82.5px;top:459.81px;font-family:'Liberation Sans', sans-serif;font-size:32px;line-height:32px;color:#a3a3a3;text-align:right;white-space:pre;letter-spacing:-0.6px;transform:scaleX(0.92);transform-origin:100% 50%">9</div>
<div style="position:absolute;left:560px;width:82.5px;top:505.61px;font-family:'Liberation Sans', sans-serif;font-size:32px;line-height:32px;color:#1f1f1f;text-align:right;white-space:pre;letter-spacing:-0.6px;transform:scaleX(0.92);transform-origin:100% 50%">10</div>
<div style="position:absolute;left:560px;width:82.5px;top:548.31px;font-family:'Liberation Sans', sans-serif;font-size:32px;line-height:32px;color:#a3a3a3;text-align:right;white-space:pre;letter-spacing:-0.6px;transform:scaleX(0.92);transform-origin:100% 50%">11</div>
<div style="position:absolute;left:560px;width:82.5px;top:592.31px;font-family:'Liberation Sans', sans-serif;font-size:32px;line-height:32px;color:#a3a3a3;text-align:right;white-space:pre;letter-spacing:-0.6px;transform:scaleX(0.92);transform-origin:100% 50%">12</div>
<div style="position:absolute;left:560px;width:82.5px;top:637.31px;font-family:'Liberation Sans', sans-serif;font-size:32px;line-height:32px;color:#a3a3a3;text-align:right;white-space:pre;letter-spacing:-0.6px;transform:scaleX(0.92);transform-origin:100% 50%">13</div>
<div style="position:absolute;left:560px;width:82.5px;top:680.31px;font-family:'Liberation Sans', sans-serif;font-size:32px;line-height:32px;color:#a3a3a3;text-align:right;white-space:pre;letter-spacing:-0.6px;transform:scaleX(0.92);transform-origin:100% 50%">14</div>
<div style="position:absolute;left:560px;width:82.5px;top:723.81px;font-family:'Liberation Sans', sans-serif;font-size:32px;line-height:32px;color:#a3a3a3;text-align:right;white-space:pre;letter-spacing:-0.6px;transform:scaleX(0.92);transform-origin:100% 50%">15</div>
<div style="position:absolute;left:560px;width:82.5px;top:769.31px;font-family:'Liberation Sans', sans-serif;font-size:32px;line-height:32px;color:#a3a3a3;text-align:right;white-space:pre;letter-spacing:-0.6px;transform:scaleX(0.92);transform-origin:100% 50%">16</div>
<div style="position:absolute;left:560px;width:82.5px;top:812.01px;font-family:'Liberation Sans', sans-serif;font-size:32px;line-height:32px;color:#a3a3a3;text-align:right;white-space:pre;letter-spacing:-0.6px;transform:scaleX(0.92);transform-origin:100% 50%">17</div>
<div style="position:absolute;left:560px;width:82.5px;top:858.51px;font-family:'Liberation Sans', sans-serif;font-size:32px;line-height:32px;color:#a3a3a3;text-align:right;white-space:pre;letter-spacing:-0.6px;transform:scaleX(0.92);transform-origin:100% 50%">18</div>
<div style="position:absolute;left:560px;width:82.5px;top:900.31px;font-family:'Liberation Sans', sans-serif;font-size:32px;line-height:32px;color:#a3a3a3;text-align:right;white-space:pre;letter-spacing:-0.6px;transform:scaleX(0.92);transform-origin:100% 50%">19</div>
<div style="position:absolute;left:560px;width:82.5px;top:946.31px;font-family:'Liberation Sans', sans-serif;font-size:32px;line-height:32px;color:#a3a3a3;text-align:right;white-space:pre;letter-spacing:-0.6px;transform:scaleX(0.92);transform-origin:100% 50%">20</div>
<div style="position:absolute;left:560px;width:82.5px;top:987.81px;font-family:'Liberation Sans', sans-serif;font-size:32px;line-height:32px;color:#a3a3a3;text-align:right;white-space:pre;letter-spacing:-0.6px;transform:scaleX(0.92);transform-origin:100% 50%">21</div>
<div style="position:absolute;left:560px;width:82.5px;top:1032.81px;font-family:'Liberation Sans', sans-serif;font-size:32px;line-height:32px;color:#a3a3a3;text-align:right;white-space:pre;letter-spacing:-0.6px;transform:scaleX(0.92);transform-origin:100% 50%">22</div>
<div style="position:absolute;left:560px;width:82.5px;top:1077.81px;font-family:'Liberation Sans', sans-serif;font-size:32px;line-height:32px;color:#a3a3a3;text-align:right;white-space:pre;letter-spacing:-0.6px;transform:scaleX(0.92);transform-origin:100% 50%">23</div>
<div style="position:absolute;left:560px;width:82.5px;top:1120.31px;font-family:'Liberation Sans', sans-serif;font-size:32px;line-height:32px;color:#a3a3a3;text-align:right;white-space:pre;letter-spacing:-0.6px;transform:scaleX(0.92);transform-origin:100% 50%">24</div>
<div style="position:absolute;left:560px;width:82.5px;top:1166.31px;font-family:'Liberation Sans', sans-serif;font-size:32px;line-height:32px;color:#a3a3a3;text-align:right;white-space:pre;letter-spacing:-0.6px;transform:scaleX(0.92);transform-origin:100% 50%">25</div>
<div style="position:absolute;left:560px;width:82.5px;top:1209.91px;font-family:'Liberation Sans', sans-serif;font-size:32px;line-height:32px;color:#a3a3a3;text-align:right;white-space:pre;letter-spacing:-0.6px;transform:scaleX(0.92);transform-origin:100% 50%">26</div>
<div style="position:absolute;left:560px;width:82.5px;top:1251.81px;font-family:'Liberation Sans', sans-serif;font-size:32px;line-height:32px;color:#a3a3a3;text-align:right;white-space:pre;letter-spacing:-0.6px;transform:scaleX(0.92);transform-origin:100% 50%">27</div>
<div style="position:absolute;left:560px;width:82.5px;top:1297.91px;font-family:'Liberation Sans', sans-serif;font-size:32px;line-height:32px;color:#a3a3a3;text-align:right;white-space:pre;letter-spacing:-0.6px;transform:scaleX(0.92);transform-origin:100% 50%">28</div>
<div style="position:absolute;left:560px;width:82.5px;top:1340.11px;font-family:'Liberation Sans', sans-serif;font-size:32px;line-height:32px;color:#a3a3a3;text-align:right;white-space:pre;letter-spacing:-0.6px;transform:scaleX(0.92);transform-origin:100% 50%">29</div>
<div style="position:absolute;left:560px;width:82.5px;top:1385.81px;font-family:'Liberation Sans', sans-serif;font-size:32px;line-height:32px;color:#a3a3a3;text-align:right;white-space:pre;letter-spacing:-0.6px;transform:scaleX(0.92);transform-origin:100% 50%">30</div>
<div style="position:absolute;left:560px;width:82.5px;top:1430.31px;font-family:'Liberation Sans', sans-serif;font-size:32px;line-height:32px;color:#a3a3a3;text-align:right;white-space:pre;letter-spacing:-0.6px;transform:scaleX(0.92);transform-origin:100% 50%">31</div>
<div style="position:absolute;left:560px;width:82.5px;top:1473.61px;font-family:'Liberation Sans', sans-serif;font-size:32px;line-height:32px;color:#a3a3a3;text-align:right;white-space:pre;letter-spacing:-0.6px;transform:scaleX(0.92);transform-origin:100% 50%">32</div>
<div style="position:absolute;left:690.2px;top:201.94px;font-family:'Liberation Mono', monospace;font-size:32.958px;line-height:32.958px;white-space:pre"><span style="color:#707e89;">//  TodoList</span></div>
<div style="position:absolute;left:690.2px;top:245.94px;font-family:'Liberation Mono', monospace;font-size:32.958px;line-height:32.958px;white-space:pre"><span style="color:#707e89;">//</span></div>
<div style="position:absolute;left:690.2px;top:289.94px;font-family:'Liberation Mono', monospace;font-size:32.958px;line-height:32.958px;white-space:pre"><span style="color:#707e89;">//  Created by Russell Gordon on 2024-04-08.</span></div>
<div style="position:absolute;left:690.2px;top:333.94px;font-family:'Liberation Mono', monospace;font-size:32.958px;line-height:32.958px;white-space:pre"><span style="color:#707e89;">//</span></div>
<div style="position:absolute;left:690.2px;top:421.94px;font-family:'Liberation Mono', monospace;font-size:32.958px;line-height:32.958px;white-space:pre"><span style="color:#a73da0; font-weight:700;">import</span><span style="color:#222222;"> Foundation</span></div>
<div style="position:absolute;left:690.2px;top:509.94px;font-family:'Liberation Mono', monospace;font-size:32.958px;line-height:32.958px;white-space:pre"><span style="color:#a73da0; font-weight:700;">struct</span><span style="color:#222222;"> </span><span style="color:#286489;">TodoItem</span><span style="color:#222222;">: </span><span style="color:#511fab;">Identifiable</span><span style="color:#222222;">, </span><span style="color:#511fab;">Codable</span><span style="color:#222222;"> {</span></div>
<div style="position:absolute;left:690.2px;top:553.94px;font-family:'Liberation Mono', monospace;font-size:32.958px;line-height:32.958px;white-space:pre"><span style="color:#222222;">    </span><span style="color:#a73da0; font-weight:700;">let</span><span style="color:#222222;"> </span><span style="color:#2c7aab;">id</span><span style="color:#222222;"> = </span><span style="color:#511fab;">UUID</span><span style="color:#222222;">()</span></div>
<div style="position:absolute;left:690.2px;top:597.94px;font-family:'Liberation Mono', monospace;font-size:32.958px;line-height:32.958px;white-space:pre"><span style="color:#222222;">    </span><span style="color:#a73da0; font-weight:700;">var</span><span style="color:#222222;"> </span><span style="color:#2c7aab;">title</span><span style="color:#222222;">: </span><span style="color:#511fab;">String</span></div>
<div style="position:absolute;left:690.2px;top:641.94px;font-family:'Liberation Mono', monospace;font-size:32.958px;line-height:32.958px;white-space:pre"><span style="color:#222222;">    </span><span style="color:#a73da0; font-weight:700;">var</span><span style="color:#222222;"> </span><span style="color:#2c7aab;">done</span><span style="color:#222222;">:  </span><span style="color:#511fab;">Bool</span></div>
<div style="position:absolute;left:690.2px;top:685.94px;font-family:'Liberation Mono', monospace;font-size:32.958px;line-height:32.958px;white-space:pre"><span style="color:#222222;">}</span></div>
<div style="position:absolute;left:690.2px;top:773.94px;font-family:'Liberation Mono', monospace;font-size:32.958px;line-height:32.958px;white-space:pre"><span style="color:#a73da0; font-weight:700;">let</span><span style="color:#222222;"> </span><span style="color:#2c7aab;">firstItem</span><span style="color:#222222;"> = </span><span style="color:#375c60;">TodoItem</span><span style="color:#222222;">(</span><span style="color:#4b7f85;">title</span><span style="color:#222222;">: </span><span style="color:#cb3532;">&quot;Study for Chemisty quiz&quot;</span><span style="color:#222222;">, </span><span style="color:#4b7f85;">done</span><span style="color:#222222;">: </span><span style="color:#a73da0; font-weight:700;">false</span><span style="color:#222222;">)</span></div>
<div style="position:absolute;left:690.2px;top:861.94px;font-family:'Liberation Mono', monospace;font-size:32.958px;line-height:32.958px;white-space:pre"><span style="color:#a73da0; font-weight:700;">let</span><span style="color:#222222;"> </span><span style="color:#2c7aab;">secondItem</span><span style="color:#222222;"> = </span><span style="color:#375c60;">TodoItem</span><span style="color:#222222;">(</span><span style="color:#4b7f85;">title</span><span style="color:#222222;">: </span><span style="color:#cb3532;">&quot;Finish Computer Science assignment&quot;</span><span style="color:#222222;">, </span><span style="color:#4b7f85;">done</span><span style="color:#222222;">: </span><span style="color:#a73da0; font-weight:700;">true</span><span style="color:#222222;">)</span></div>
<div style="position:absolute;left:690.2px;top:949.94px;font-family:'Liberation Mono', monospace;font-size:32.958px;line-height:32.958px;white-space:pre"><span style="color:#a73da0; font-weight:700;">let</span><span style="color:#222222;"> </span><span style="color:#2c7aab;">thirdItem</span><span style="color:#222222;"> = </span><span style="color:#375c60;">TodoItem</span><span style="color:#222222;">(</span><span style="color:#4b7f85;">title</span><span style="color:#222222;">: </span><span style="color:#cb3532;">&quot;Go for a run around campus&quot;</span><span style="color:#222222;">, </span><span style="color:#4b7f85;">done</span><span style="color:#222222;">: </span><span style="color:#a73da0; font-weight:700;">false</span><span style="color:#222222;">)</span></div>
<div style="position:absolute;left:690.2px;top:1037.94px;font-family:'Liberation Mono', monospace;font-size:32.958px;line-height:32.958px;white-space:pre"><span style="color:#a73da0; font-weight:700;">let</span><span style="color:#222222;"> </span><span style="color:#2c7aab;">exampleItems</span><span style="color:#222222;"> = [</span></div>
<div style="position:absolute;left:690.2px;top:1125.94px;font-family:'Liberation Mono', monospace;font-size:32.958px;line-height:32.958px;white-space:pre"><span style="color:#4b7f85;">    firstItem</span></div>
<div style="position:absolute;left:690.2px;top:1169.94px;font-family:'Liberation Mono', monospace;font-size:32.958px;line-height:32.958px;white-space:pre"><span style="color:#222222;">    ,</span></div>
<div style="position:absolute;left:690.2px;top:1213.94px;font-family:'Liberation Mono', monospace;font-size:32.958px;line-height:32.958px;white-space:pre"><span style="color:#4b7f85;">    secondItem</span></div>
<div style="position:absolute;left:690.2px;top:1257.94px;font-family:'Liberation Mono', monospace;font-size:32.958px;line-height:32.958px;white-space:pre"><span style="color:#222222;">    ,</span></div>
<div style="position:absolute;left:690.2px;top:1301.94px;font-family:'Liberation Mono', monospace;font-size:32.958px;line-height:32.958px;white-space:pre"><span style="color:#4b7f85;">    thirdItem</span></div>
<div style="position:absolute;left:690.2px;top:1345.94px;font-family:'Liberation Mono', monospace;font-size:32.958px;line-height:32.958px;white-space:pre"><span style="color:#222222;">    ,</span></div>
<div style="position:absolute;left:690.2px;top:1433.94px;font-family:'Liberation Mono', monospace;font-size:32.958px;line-height:32.958px;white-space:pre"><span style="color:#222222;">]</span></div>
<div style="position:absolute;left:848px;top:581px;width:20px;height:2.5px;background:#f2bd3c;"></div>
<svg style="position:absolute;left:569px;top:1851.5px;overflow:visible" width="30" height="19" viewBox="0 0 30 19"><path d="M0 3Q0 0 3 0H23L29.5 9.5L23 19H3Q0 19 0 16Z" fill="#3478f6"/></svg>
<div style="position:absolute;left:614px;top:1850px;width:2px;height:22px;background:#e2e2e2;"></div>
<svg style="position:absolute;left:636px;top:1847.5px;overflow:visible" width="20" height="27" viewBox="0 0 20 27"><rect x="1.6" y="1" width="4.6" height="24.6" rx="1.6" fill="none" stroke="#737373" stroke-width="1.8"/><rect x="13.6" y="1" width="4.6" height="24.6" rx="1.6" fill="none" stroke="#737373" stroke-width="1.8"/></svg>
<svg style="position:absolute;left:692.5px;top:1847px;overflow:visible" width="27" height="27" viewBox="0 0 27 27"><path d="M1.5 15L12 5.5L22 13.5M22 8V14H16" fill="none" stroke="#b8b8b8" stroke-width="1.8" stroke-linejoin="round"/><rect x="5" y="21" width="16" height="5" fill="none" stroke="#b8b8b8" stroke-width="1.8"/></svg>
<svg style="position:absolute;left:757px;top:1847px;overflow:visible" width="18" height="27" viewBox="0 0 18 27"><path d="M9 1V15M3 9.5L9 15.5L15 9.5" fill="none" stroke="#b8b8b8" stroke-width="1.8"/><rect x="1" y="21" width="16" height="5" fill="none" stroke="#b8b8b8" stroke-width="1.8"/></svg>
<svg style="position:absolute;left:816.5px;top:1847px;overflow:visible" width="18" height="27" viewBox="0 0 18 27"><path d="M9 15V1.5M3 7.5L9 1.5L15 7.5" fill="none" stroke="#b8b8b8" stroke-width="1.8"/><rect x="1" y="21" width="16" height="5" fill="none" stroke="#b8b8b8" stroke-width="1.8"/></svg>
<div style="position:absolute;left:856px;top:1850px;width:2px;height:22px;background:#e2e2e2;"></div>
<svg style="position:absolute;left:876px;top:1848px;overflow:visible" width="24" height="28" viewBox="0 0 24 28"><g fill="none" stroke="#737373" stroke-width="1.9" stroke-linejoin="round" stroke-linecap="round"><path d="M10.3 11.8L22.2 5.9V20.7L10.3 26.2Z"/><path d="M5.8 23.5V8.4L18.2 3.1"/><path d="M1.4 21V6L14 0.8"/></g></svg>
<svg style="position:absolute;left:934px;top:1847.5px;overflow:visible" width="27" height="27" viewBox="0 0 27 27"><g fill="none" stroke="#737373" stroke-width="1.9"><circle cx="5" cy="5" r="3.8"/><circle cx="22" cy="13.5" r="3.8"/><circle cx="5" cy="22" r="3.8"/><path d="M8.5 6.8L18.5 11.8M8.5 20.2L18.5 15.2"/></g></svg>
<svg style="position:absolute;left:996px;top:1848px;overflow:visible" width="24" height="27" viewBox="0 0 24 27"><g fill="none" stroke="#737373" stroke-width="1.9"><rect x="1" y="1" width="22" height="11" rx="5.5"/><rect x="1" y="15" width="22" height="11" rx="5.5"/></g><circle cx="7" cy="6.5" r="3" fill="#737373"/><circle cx="17" cy="20.5" r="3" fill="#737373"/></svg>
<svg style="position:absolute;left:1055px;top:1848px;overflow:visible" width="27" height="27" viewBox="0 0 27 27"><path d="M1.2 10.8L25.4 0.6L15.2 24.6L14.1 12.2Q14 11.2 13 11.1Z" fill="none" stroke="#737373" stroke-width="2" stroke-linejoin="round"/></svg>
<div style="position:absolute;left:1098px;top:1850px;width:2px;height:22px;background:#e2e2e2;"></div>
<svg style="position:absolute;left:1118px;top:1848.5px;overflow:visible" width="23" height="23.5" viewBox="0 0 23 23.5"><rect x="0" y="0" width="23" height="23.5" rx="5.52" fill="#6f6f6f"/><g transform="scale(0.7931,0.7833)" stroke="#fff" stroke-width="2.3" stroke-linecap="round" fill="none"><path d="M12.3 6.6L14.3 9.6"/><path d="M17.0 6.6L10.4 17.6"/><path d="M9.2 20.4L7.6 22.6"/><path d="M15.9 12.4L22.0 22.6"/><path d="M6.0 18.1H16.0M18.6 18.1H23.2"/></g></svg>
<div id="t40" style="position:absolute;left:1155.00px;top:1850.38px;font-family:'Liberation Sans', sans-serif;font-size:22px;line-height:22px;color:#2e2e2e;font-weight:400;letter-spacing:0.871px;white-space:pre;">TodoList</div>
<div id="t41" style="position:absolute;left:2759.00px;top:1850.58px;font-family:'Liberation Sans', sans-serif;font-size:22px;line-height:22px;color:#878787;font-weight:400;letter-spacing:1.056px;white-space:pre;">Line: 10  Col: 35</div>
<div style="position:absolute;left:2954px;top:1850px;width:2px;height:22px;background:#e2e2e2;"></div>
<svg style="position:absolute;left:2972.5px;top:1847.5px;overflow:visible" width="27" height="27" viewBox="0 0 27 27"><rect x="1.2" y="1.2" width="24.6" height="24.6" rx="4.5" fill="none" stroke="#737373" stroke-width="2.2"/><rect x="4.5" y="16.5" width="18" height="6" rx="2.5" fill="#737373"/></svg>
</div>
<div style="position:absolute;left:0;top:0;width:14px;height:1px;background:#000"></div></body></html>
